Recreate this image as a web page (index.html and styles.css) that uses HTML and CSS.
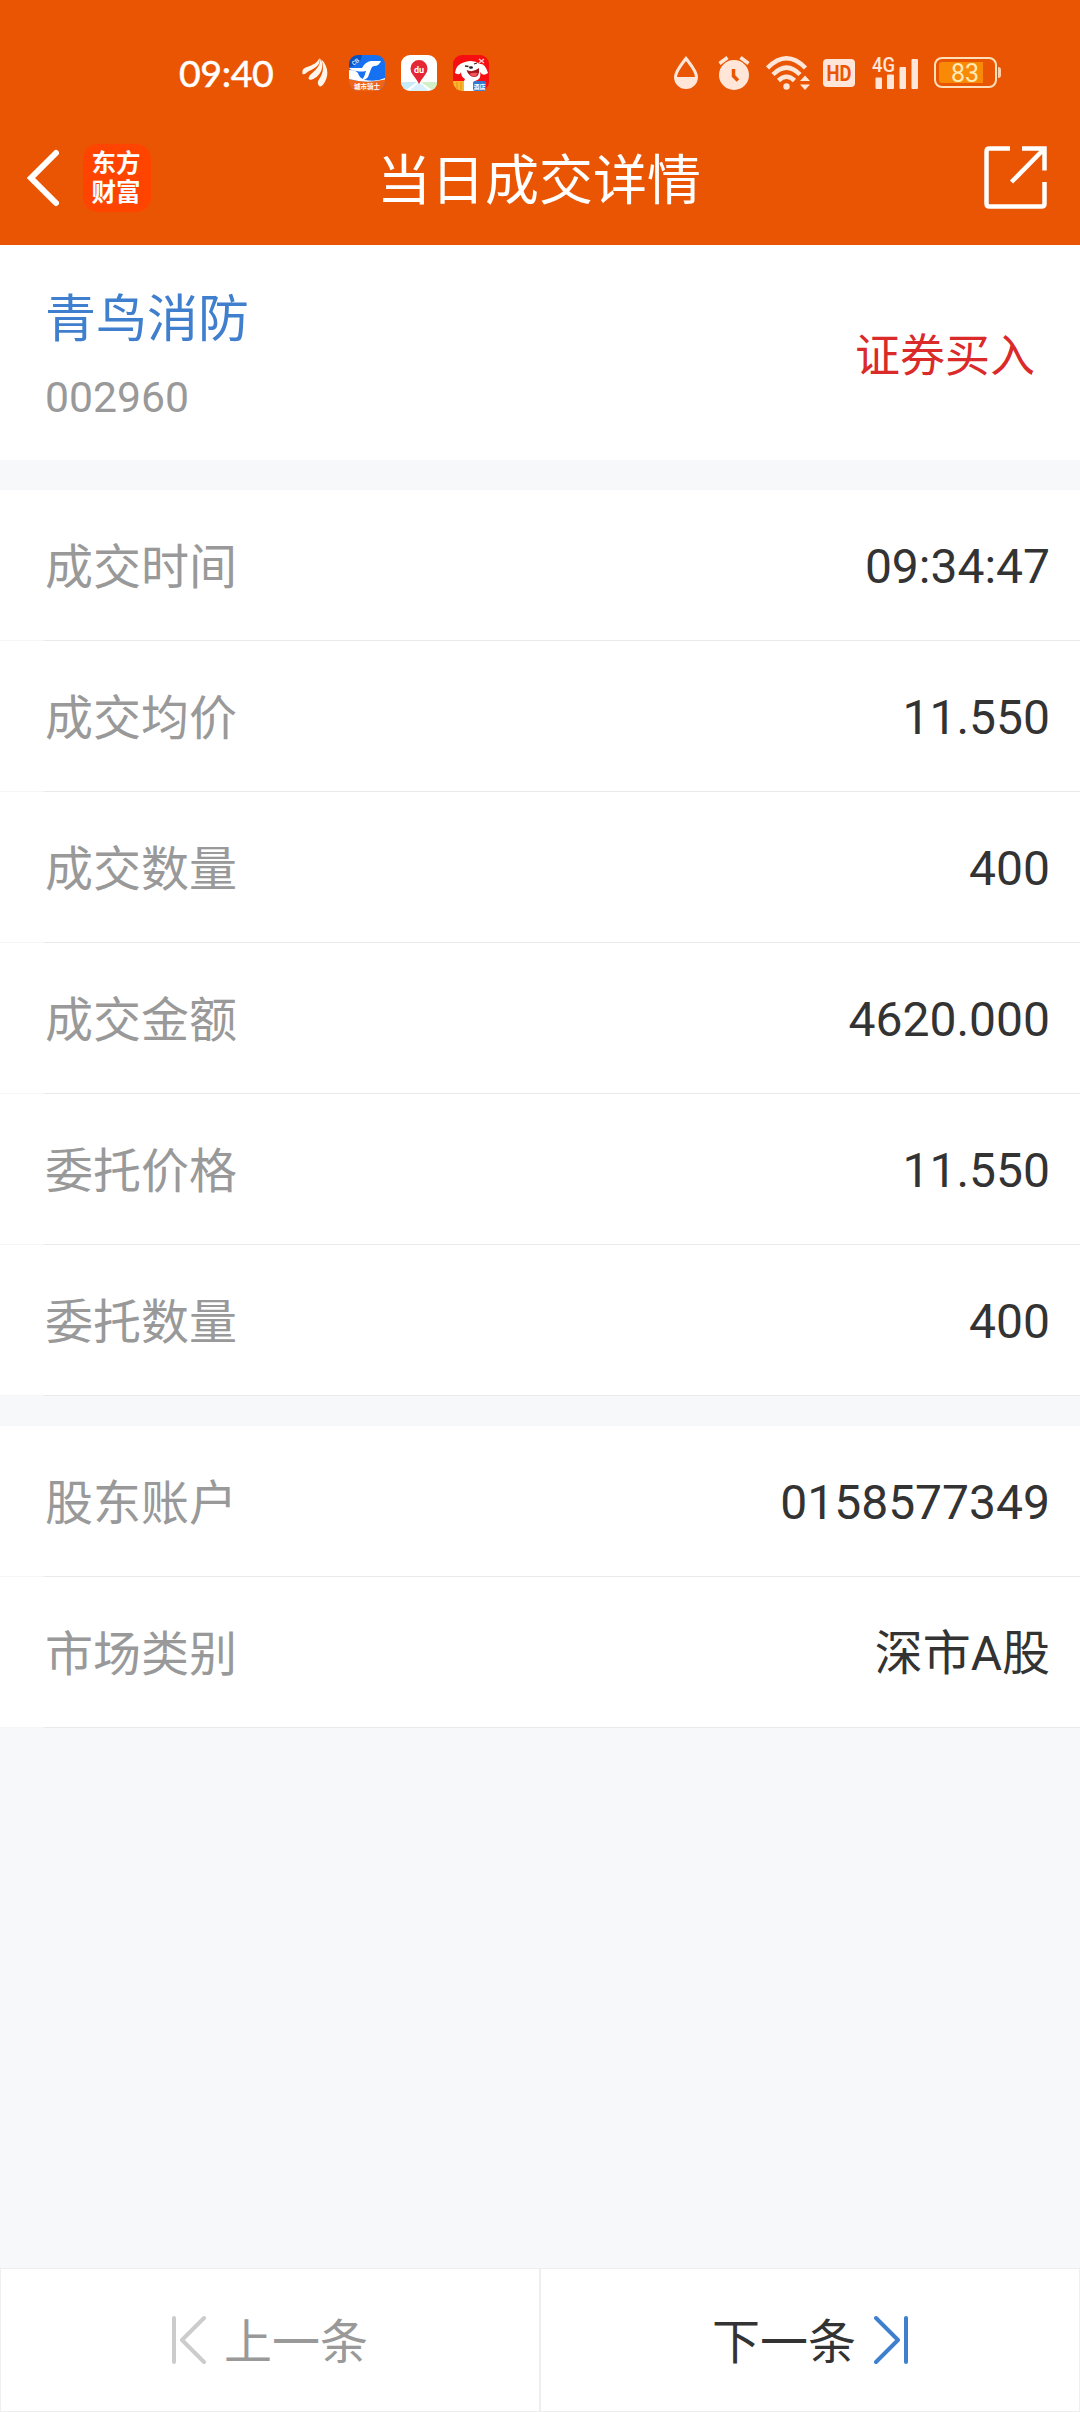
FILE: index.html
```
<!DOCTYPE html>
<html lang="zh-CN">
<head>
    <meta charset="UTF-8">
    <meta name="viewport" content="width=device-width, initial-scale=1.0">
    <title>当日成交详情</title>
    <link rel="stylesheet" href="styles.css">
</head>
<body>
    <header class="header">
        <div class="status-bar">
            <div class="status-left">
                <span class="clock">09:40</span>
                <svg class="wing" width="26" height="30" viewBox="0 0 26 30" fill="#fff5ea">
                    <path d="M0.500 16C0 12 1 10.500 5 9C11 7 15 5 17.500 0C19 6 14 10 8 12.500C4 14.500 3 17 0.500 16Z"/>
                    <path d="M6.500 20.500C7 17 10 15.500 13 12.500C17 8.500 18 5 18.500 0.500C22 7 20 15 14.500 19C11 21.500 8 23 6.500 20.500Z"/>
                    <path d="M16.500 27C14.500 24 17 22 19 18C22 12 21 7 19.500 1.500C25 7 26.500 14 24.500 20C22.500 26 18.500 31 16.500 27Z"/>
                </svg>
                <svg class="app-icon" width="36" height="36" viewBox="0 0 36 36">
                    <rect width="36" height="36" rx="9" fill="#1671f2"/>
                    <path d="M0 24Q18 29 36 24V27A9 9 0 0 1 27 36H9A9 9 0 0 1 0 27Z" fill="#f06418"/>
                    <path d="M0 10V9A9 9 0 0 1 9 0H13Q12 10 0 12Z" fill="#0b50bd"/>
                    <path d="M13 13Q16 7 22 6H32Q30 11 25 11Q23 11 22 14L19 22Q17 25 13 25Q16 21 17 16Q11 17 8 16Q2 16 0 13Z" fill="#fff"/>
                    <path d="M0 15Q7 15 9 18Q10 23 16 25Q28 27 36 23V24.500Q18 29 0 24Z" fill="#fff"/>
                    <text class="tiny-cjk" x="18" y="34" font-size="6.500" text-anchor="middle" fill="#fff">城市骑士</text>
                    <text class="tiny" x="3" y="10" font-size="6" transform="rotate(-38 5 8)" fill="#cfe2ff">CB</text>
                </svg>
                <svg class="app-icon" width="36" height="36" viewBox="0 0 36 36">
                    <rect width="36" height="36" rx="9" fill="#fff"/>
                    <path d="M2 27L16 27L5 35Q1 32 0 27Z" fill="#c8ebfa"/>
                    <path d="M20 27H36Q36 33 31 35Z" fill="#d2f0c8"/>
                    <path d="M17 28L8 36H28L19 28Z" fill="#d7f0fb"/>
                    <path d="M18 29Q16 25 12 20Q9.500 17 9.500 13.500A8.500 8.500 0 0 1 26.500 13.500Q26.500 17 24 20Q20 25 18 29Z" fill="#e52635"/>
                    <text class="tiny" x="18" y="17.500" font-size="9" text-anchor="middle" fill="#fff">du</text>
                </svg>
                <svg class="app-icon" width="36" height="36" viewBox="0 0 36 36">
                    <rect width="36" height="36" rx="9" fill="#f70e12"/>
                    <path d="M2 18Q3 9 12 7Q20 4 27 9Q32 8 35 18Q30 22 27 17Q29 24 22 26Q27 29 27 36H10V27Q12 25 12 24Q8 22 8 17Q7 21 2 18Z" fill="#fff"/>
                    <path d="M13.500 15Q20 18 26 13Q27 22 21 22Q16 22 13.500 15Z" fill="#a51619"/>
                    <path d="M16 19Q20 17 25 18Q23 22 20 21.500Z" fill="#f3575b"/>
                    <path d="M12 11l3.500 0.500M21 9l3-1" stroke="#3c2222" stroke-width="1.300"/>
                    <ellipse cx="18" cy="12.500" rx="2" ry="1.300" fill="#222"/>
                    <path d="M0 26H11V36H9A9 9 0 0 1 0 27Z" fill="#f9b62c"/>
                    <path d="M4 27v8M8 27v9" stroke="#e78c16" stroke-width="1"/>
                    <rect x="20" y="26" width="13" height="10" rx="2" fill="#3177d2"/>
                    <text class="tiny-cjk" x="26.500" y="33.500" font-size="6" text-anchor="middle" fill="#fff">酒店</text>
                    <path d="M26 4l5 4M31 4l-5 4" stroke="#ffd3d3" stroke-width="1.300"/>
                </svg>
            </div>
            <div class="status-right">
                <svg class="drop" width="26" height="34" viewBox="0 0 26 34">
                    <path d="M13 2.500C8 9 2.500 15 2.500 21A10.500 10.500 0 0 0 23.500 21C23.500 15 18 9 13 2.500Z" fill="none" stroke="#ffe6d8" stroke-width="3"/>
                    <path d="M2 21H24A11 11 0 0 1 2 21Z" fill="#ffe6d8"/>
                </svg>
                <svg class="alarm" width="32" height="34" viewBox="0 0 32 34">
                    <circle cx="16" cy="19" r="15" fill="#ffe6d8"/>
                    <path d="M1.500 7.500L9.500 1.500M30.500 7.500L22.500 1.500" stroke="#ffe6d8" stroke-width="3.500"/>
                    <path d="M15.500 13V20L20 24.500" fill="none" stroke="#ea5504" stroke-width="3.500"/>
                </svg>
                <svg class="wifi" width="44" height="35" viewBox="0 0 44 35">
                    <g fill="none" stroke="#ffe6d8" stroke-width="4.500">
                        <path d="M1.500 12Q20.500-7.500 39.500 12"/>
                        <path d="M7 18.500Q20.500 5 34 18.500"/>
                        <path d="M12.500 24.500Q20.500 17 28.500 24.500"/>
                    </g>
                    <circle cx="20.500" cy="30.500" r="3.200" fill="#ffe6d8"/>
                    <path d="M34 25H44L39 19.500ZM34 28.500H44L39 34Z" fill="#ffe6d8"/>
                </svg>
                <svg class="hd" width="32" height="28" viewBox="0 0 32 28">
                    <rect width="32" height="28" rx="4" fill="#ffe6d8"/>
                    <text class="tiny" x="16" y="22" font-size="22" text-anchor="middle" textLength="25" lengthAdjust="spacingAndGlyphs" fill="#ea5504">HD</text>
                </svg>
                <svg class="signal" width="47" height="34" viewBox="0 0 47 34" fill="#ffe6d8">
                    <text class="tiny-medium" x="0" y="15.500" font-size="20" textLength="23" lengthAdjust="spacingAndGlyphs">4G</text>
                    <rect x="3.500" y="21.500" width="6.500" height="11.500" rx="1"/>
                    <rect x="15" y="18.500" width="7" height="14.500" rx="1"/>
                    <rect x="27.500" y="11" width="6.500" height="22" rx="1"/>
                    <rect x="39.500" y="3" width="6.500" height="30" rx="1"/>
                </svg>
                <svg class="battery" width="67" height="32" viewBox="0 0 67 32">
                    <rect x="1" y="1" width="61" height="29" rx="7" fill="none" stroke="#ffe0b8" stroke-width="2"/>
                    <path d="M8 5H49V26H8Q5 26 5 23V8Q5 5 8 5Z" fill="#f98a07"/>
                    <path d="M64 10Q67 10 67 13V18Q67 21 64 21Z" fill="#ffd0a8"/>
                    <text class="battery-text" x="31" y="24.500" font-size="25" text-anchor="middle" fill="#ffebb5">83</text>
                </svg>
            </div>
        </div>
        <nav class="nav-bar">
            <div class="nav-left">
                <svg class="back" width="34" height="58" viewBox="0 0 34 58" fill="none" stroke="#fff" stroke-width="6">
                    <path d="M31 4L6 29L31 54" stroke-linecap="round"/>
                </svg>
                <div class="brand"><span>东方</span><span>财富</span></div>
            </div>
            <h1 class="title">当日成交详情</h1>
            <svg class="share" width="64" height="64" viewBox="0 0 64 64" fill="none" stroke="#fff" stroke-width="4.500">
                <path d="M26 2.500H5.500Q2.500 2.500 2.500 5.500V57.500Q2.500 60.500 5.500 60.500H57.500Q60.500 60.500 60.500 57.500V36"/>
                <path d="M38 2.500H60.500V24.500M60 3L27.500 36"/>
            </svg>
        </nav>
    </header>

    <section class="stock">
        <div class="stock-info">
            <div class="stock-name">青鸟消防</div>
            <div class="stock-code">002960</div>
        </div>
        <div class="trade-type">证券买入</div>
    </section>

    <section class="list">
        <div class="row"><span class="label">成交时间</span><span class="value">09:34:47</span></div>
        <div class="row"><span class="label">成交均价</span><span class="value">11.550</span></div>
        <div class="row"><span class="label">成交数量</span><span class="value">400</span></div>
        <div class="row"><span class="label">成交金额</span><span class="value">4620.000</span></div>
        <div class="row"><span class="label">委托价格</span><span class="value">11.550</span></div>
        <div class="row"><span class="label">委托数量</span><span class="value">400</span></div>
    </section>

    <section class="list">
        <div class="row"><span class="label">股东账户</span><span class="value">0158577349</span></div>
        <div class="row"><span class="label">市场类别</span><span class="value">深市A股</span></div>
    </section>

    <footer class="pager">
        <div class="pager-btn prev">
            <svg width="34" height="50" viewBox="0 0 34 50" fill="none" stroke="#ccc" stroke-width="4" stroke-linecap="round" stroke-linejoin="round">
                <path d="M2 3V47M32 3L10 25L32 47"/>
            </svg>
            <span>上一条</span>
        </div>
        <div class="pager-btn next">
            <span>下一条</span>
            <svg width="34" height="50" viewBox="0 0 34 50" fill="none" stroke="#3f7fcd" stroke-width="4" stroke-linecap="round" stroke-linejoin="round">
                <path d="M32 3V47M2 3L24 25L2 47"/>
            </svg>
        </div>
    </footer>
</body>
</html>
```

FILE: styles.css
```
* {
    box-sizing: border-box;
}
body {
    margin: 0;
    height: 2412px;
    display: flex;
    flex-direction: column;
    background-color: #f6f8fa;
    color: #333;
    font-family: Roboto, "Noto Sans CJK SC", sans-serif;
    font-size: 48px;
}
svg {
    display: block;
    flex-shrink: 0;
}

/* Header */
.header {
    height: 245px;
    background-color: #ea5504;
    color: #fff;
}
.status-bar {
    display: flex;
    justify-content: space-between;
    height: 110px;
    padding: 36px 79px 0 179px;
}
.status-left,
.status-right {
    display: flex;
    align-items: center;
    height: 74px;
}
.clock {
    width: 123px;
    padding-bottom: 2px;
    font-family: Lato, sans-serif;
    font-size: 37.5px;
    letter-spacing: -0.4px;
    -webkit-text-stroke: 0.5px #fff;
}
.wing {
    margin-right: 5px;
}
.app-icon {
    margin-left: 16px;
}
.alarm {
    margin-left: 19px;
}
.wifi {
    margin-left: 16px;
}
.hd {
    margin-left: 13px;
}
.signal {
    margin: 0 15px 0 17px;
    overflow: visible;
}
.tiny {
    font-family: Roboto, sans-serif;
    font-weight: 700;
}
.tiny-medium {
    font-family: Roboto, sans-serif;
    font-weight: 500;
}
.battery-text {
    font-family: Roboto, sans-serif;
    font-weight: 400;
}
.tiny-cjk {
    font-family: "Noto Sans CJK SC", sans-serif;
    font-weight: 700;
}
.nav-bar {
    display: grid;
    grid-template-columns: 1fr auto 1fr;
    align-items: center;
    height: 135px;
    padding: 0 32px 0 25px;
}
.nav-left {
    display: flex;
    align-items: center;
}
.brand {
    display: flex;
    flex-direction: column;
    align-items: center;
    justify-content: center;
    width: 68px;
    height: 68px;
    margin-left: 24px;
    padding: 0 2px 4px 0;
    border-radius: 15px;
    background-color: #ff4400;
    font-family: "Noto Sans CJK SC", sans-serif;
    font-size: 24.5px;
    font-weight: 700;
    line-height: 29px;
}
.title {
    margin: 0 0 0 5px;
    padding-top: 9px;
    font-size: 54px;
    font-weight: 400;
    line-height: 64px;
}
.share {
    justify-self: end;
}

/* Stock summary */
.stock {
    display: flex;
    justify-content: space-between;
    align-items: center;
    height: 215px;
    padding: 0 45px;
    background-color: #fff;
}
.stock-info {
    padding-top: 9px;
}
.stock-name {
    color: #3f7fcd;
    font-size: 51px;
    line-height: 76px;
}
.stock-code {
    margin-top: 3px;
    color: #999;
    font-size: 42.7px;
    line-height: 72px;
}
.trade-type {
    color: #da2a29;
    font-size: 45px;
}

/* Detail rows */
.list {
    margin-top: 30px;
    background-color: #fff;
}
.row {
    display: flex;
    justify-content: space-between;
    align-items: center;
    height: 151px;
    padding: 0 30px 0 45px;
    border-bottom: 1px solid;
    border-image: linear-gradient(to right, #f6f6f6 45px, #e9e9e9 45px) 1;
    line-height: 60px;
}
.label {
    padding-top: 5px;
    color: #999;
}
.value {
    padding-top: 3px;
}

/* Previous / next */
.pager {
    display: flex;
    height: 144px;
    margin-top: auto;
}
.pager-btn {
    display: flex;
    flex: 1;
    align-items: center;
    justify-content: center;
    gap: 18px;
    border: 1px solid #eee;
    background-color: #fff;
    line-height: 60px;
}
.pager-btn span {
    padding-top: 5px;
}
.prev {
    color: #999;
}
```
